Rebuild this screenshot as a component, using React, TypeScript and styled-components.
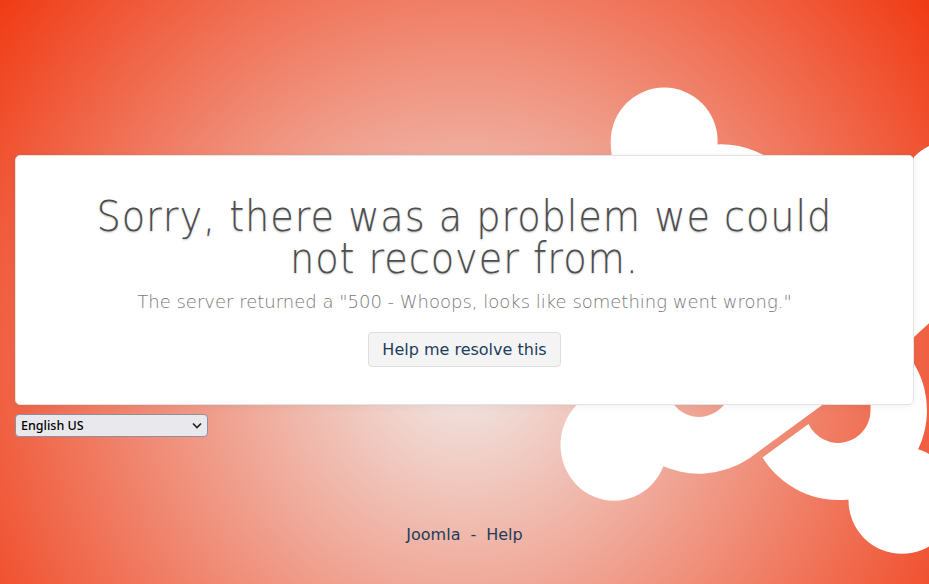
import React from "react";
import styled, { createGlobalStyle } from "styled-components";

const GlobalStyle = createGlobalStyle`
  * { box-sizing: border-box; }
  html, body, #root { height: 100%; }
  body { margin: 0; overflow: hidden; font-family: "DejaVu Sans", sans-serif; }
`;

const Page = styled.main`
  position: relative;
  height: 584px;
  padding: 155px 15px 0;
  display: flex;
  flex-direction: column;
  overflow: hidden;
  isolation: isolate;
  background: radial-gradient(circle at 464.5px 365px, #f0ebe9 0, #f03811 600px);
`;

const Mark = styled.svg`
  position: absolute;
  inset: 0;
  z-index: -1;
`;

const Card = styled.section`
  height: 250px;
  padding: 40px 60px 0;
  display: flex;
  flex-direction: column;
  align-items: center;
  text-align: center;
  background: #fff;
  border: 1px solid #e3e3e3;
  border-radius: 5px;
  box-shadow: 0 1px 10px rgba(0, 0, 0, 0.06);
`;

const Title = styled.h1`
  margin: 0;
  font-size: 42px;
  line-height: 42px;
  font-weight: 200;
  letter-spacing: 1px;
  white-space: nowrap;
  color: #4d4d4d;
  text-shadow: 0 1px 2px rgba(0, 0, 0, 0.25);
  transform: scaleX(0.912);
`;

const Message = styled.p`
  margin: 8px 0 0;
  font-size: 18px;
  line-height: 27px;
  font-weight: 200;
  color: #777;
`;

const HelpButton = styled.a`
  margin-top: 17px;
  height: 35px;
  width: 193px;
  display: flex;
  align-items: center;
  justify-content: center;
  font-size: 16px;
  color: #1c3d5c;
  background: #f4f4f4;
  border: 1px solid #ddd;
  border-radius: 4px;
  white-space: nowrap;
`;

const SelectBox = styled.div`
  margin-top: 9px;
  width: 193px;
  height: 23px;
  padding: 0 5px;
  display: flex;
  align-items: center;
  justify-content: space-between;
  font: 500 12.5px "Noto Sans", sans-serif;
  color: #000;
  background: #e9e9ed;
  border: 1px solid #8f8f9d;
  border-radius: 4px;
`;

const Footer = styled.footer`
  margin-top: 88px;
  display: flex;
  justify-content: center;
  gap: 10px;
  font-size: 16px;
  line-height: 19px;
  color: #1c3d5c;
`;

export default function App() {
  return (
    <>
      <GlobalStyle />
      <Page>
        <Mark width="929" height="584" viewBox="0 0 929 584" fill="#fff" aria-hidden="true">
          <circle cx="664.2" cy="141" r="53.4" />
          <path d="M610.800 141Q610.800 150 611.700 156H640V141Z" />
          <circle cx="721" cy="234.300" r="90" />
          <path d="M953 141A53 53 0 0 0 914 157V337L940 313V141Z" />
          <ellipse cx="614" cy="445" rx="53.500" ry="55.800" />
          <path
            fillRule="evenodd"
            d="M609 384A90 90 0 0 0 750.500 457.500L825 403V384ZM667 384a32 32 0 0 0 56 22L745 384Z"
          />
          <path d="M762.500 457.500L808.500 424A32.500 32.500 0 0 0 870.500 409.500V346.500H900.500A90 90 0 0 1 848.500 499.500A90 90 0 0 1 762.500 457.500Z" />
          <circle cx="902" cy="500.300" r="53.500" />
        </Mark>
        <Card>
          <Title>
            Sorry, there was a problem we could
            <br />
            not recover from.
          </Title>
          <Message>The server returned a "500 - Whoops, looks like something went wrong."</Message>
          <HelpButton>Help me resolve this</HelpButton>
        </Card>
        <SelectBox role="combobox">
          <span>English US</span>
          <svg width="10" height="8" viewBox="0 0 10 8" fill="none" stroke="#222" strokeWidth="1.7">
            <path d="M1 1.500L5 5.500L9 1.500" />
          </svg>
        </SelectBox>
        <Footer>
          <span>Joomla</span>
          <span>-</span>
          <span>Help</span>
        </Footer>
      </Page>
    </>
  );
}
